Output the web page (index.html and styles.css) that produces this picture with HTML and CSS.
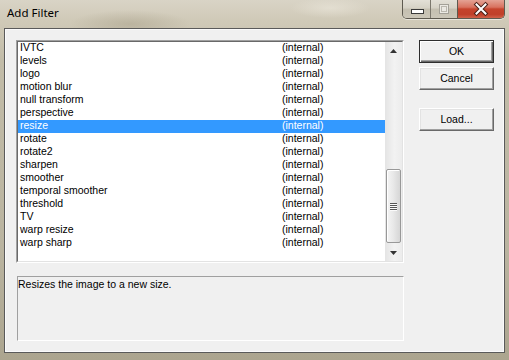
FILE: index.html
```html
<!DOCTYPE html>
<html>
<head>
<meta charset="utf-8">
<link rel="stylesheet" href="styles.css">
</head>
<body>
<div class="window">
  <div class="titlebar">
    <span class="title">Add Filter</span>
    <div class="caption">
      <div class="cb min"><svg width="27" height="18" viewBox="0 0 27 18"><rect x="8.5" y="9.5" width="12" height="4" fill="#fff" stroke="#3a3a3a"/></svg></div>
      <div class="cb max"><svg width="26" height="18" viewBox="0 0 26 18"><rect x="8.5" y="4.5" width="9" height="9" fill="#ebe9e3" stroke="#a3a097"/><rect x="10.5" y="6.5" width="5" height="5" fill="none" stroke="#bab7ae"/></svg></div>
      <div class="cb close"><svg width="46" height="18" viewBox="0 0 46 18"><path d="M18.5 4.5 L27.5 13.5 M27.5 4.5 L18.5 13.5" stroke="#4a2018" stroke-width="4" stroke-linecap="square"/><path d="M18.5 4.5 L27.5 13.5 M27.5 4.5 L18.5 13.5" stroke="#fff" stroke-width="2" stroke-linecap="square"/></svg></div>
    </div>
  </div>
  <div class="client">
    <div class="main">
      <div class="listbox">
        <div class="listinner">
          <div class="rows">
            <div class="row"><span class="name">IVTC</span><span>(internal)</span></div>
            <div class="row"><span class="name">levels</span><span>(internal)</span></div>
            <div class="row"><span class="name">logo</span><span>(internal)</span></div>
            <div class="row"><span class="name">motion blur</span><span>(internal)</span></div>
            <div class="row"><span class="name">null transform</span><span>(internal)</span></div>
            <div class="row"><span class="name">perspective</span><span>(internal)</span></div>
            <div class="row selected"><span class="name">resize</span><span>(internal)</span></div>
            <div class="row"><span class="name">rotate</span><span>(internal)</span></div>
            <div class="row"><span class="name">rotate2</span><span>(internal)</span></div>
            <div class="row"><span class="name">sharpen</span><span>(internal)</span></div>
            <div class="row"><span class="name">smoother</span><span>(internal)</span></div>
            <div class="row"><span class="name">temporal smoother</span><span>(internal)</span></div>
            <div class="row"><span class="name">threshold</span><span>(internal)</span></div>
            <div class="row"><span class="name">TV</span><span>(internal)</span></div>
            <div class="row"><span class="name">warp resize</span><span>(internal)</span></div>
            <div class="row"><span class="name">warp sharp</span><span>(internal)</span></div>
          </div>
          <div class="scrollbar">
            <div class="arrow"><svg width="7" height="4" viewBox="0 0 7 4"><path d="M3.5 0 L7 4 L0 4 Z" fill="#333"/></svg></div>
            <div class="track">
              <div class="thumb">
                <div class="grip"></div><div class="grip"></div><div class="grip"></div><div class="grip"></div>
              </div>
            </div>
            <div class="arrow"><svg width="7" height="4" viewBox="0 0 7 4"><path d="M0 0 L7 0 L3.5 4 Z" fill="#333"/></svg></div>
          </div>
        </div>
      </div>
      <div class="desc">Resizes the image to a new size.</div>
    </div>
    <div class="buttons">
      <div class="btn default">OK</div>
      <div class="btn cancel">Cancel</div>
      <div class="btn load">Load...</div>
    </div>
  </div>
</div>
</body>
</html>
```
FILE: styles.css
```css
html, body {
  margin: 0;
  padding: 0;
}
body {
  width: 509px;
  height: 360px;
  overflow: hidden;
  background: #bdb7a4;
}
.window {
  width: 509px;
  height: 360px;
  box-sizing: border-box;
  padding: 0 4px;
  background:
    radial-gradient(ellipse 60px 14px at 130px 24px, rgba(150,140,115,0.35), transparent),
    radial-gradient(ellipse 40px 10px at 330px 8px, rgba(240,236,225,0.5), transparent),
    linear-gradient(180deg, #d9d4c6 0px, #d0cab8 20px, #c2bca8 60px, #bab4a0 250px, #aca58f 360px);
  font-family: "Liberation Sans", Arial, sans-serif;
}
.titlebar {
  height: 28px;
  display: flex;
  justify-content: space-between;
  align-items: flex-start;
}
.title {
  font-family: "Noto Sans", "Open Sans", sans-serif;
  font-size: 11.5px;
  line-height: 14px;
  color: #000;
  padding: 6px 0 0 3px;
}
.caption {
  display: flex;
  height: 19px;
  box-sizing: border-box;
  border: 1px solid #5e5a50;
  border-top: none;
  border-radius: 0 0 5px 5px;
  overflow: hidden;
  margin-right: 0;
  box-shadow: 0 1px 0 rgba(255,255,255,0.5);
}
.cb {
  height: 18px;
  display: flex;
}
.cb.min {
  width: 27px;
  border-right: 1px solid #7c786d;
  background: linear-gradient(180deg, #e3e0d7 0%, #d6d2c6 45%, #c4bfb0 50%, #cbc6b8 100%);
}
.cb.max {
  width: 26px;
  border-right: 1px solid #5e5a50;
  background: linear-gradient(180deg, #e3e0d7 0%, #d6d2c6 45%, #c4bfb0 50%, #cbc6b8 100%);
}
.cb.close {
  width: 46px;
  background: linear-gradient(180deg, #e4a294 0%, #d8725f 40%, #c5432c 50%, #c0402a 80%, #d0624a 100%);
}
.client {
  height: 325px;
  box-sizing: border-box;
  border: 1px solid #5a5a5a;
  box-shadow: inset 0 0 0 1px #fbfbfb;
  background: #f0f0f0;
  padding: 11px 0 0 11px;
  display: flex;
  gap: 15px;
  font-size: 10.5px;
  color: #000;
}
.main {
  width: 388px;
  display: flex;
  flex-direction: column;
}
.listbox {
  height: 223px;
  box-sizing: border-box;
  border: 1px solid;
  border-color: #a0a0a0 #ffffff #ffffff #a0a0a0;
}
.listinner {
  height: 100%;
  box-sizing: border-box;
  border: 1px solid;
  border-color: #696969 #e3e3e3 #e3e3e3 #696969;
  background: #fff;
  display: flex;
}
.rows {
  flex: 1;
}
.row {
  height: 13px;
  box-sizing: border-box;
  line-height: 11px;
  padding: 0 0 2px 2px;
  display: flex;
  white-space: nowrap;
}
.row .name {
  width: 262px;
}
.row.selected {
  background: #3399ff;
  color: #fff;
}
.scrollbar {
  width: 17px;
  display: flex;
  flex-direction: column;
  background: linear-gradient(90deg, #e4e4e4 0%, #f2f2f2 55%, #ececec 100%);
}
.arrow {
  height: 17px;
  display: flex;
  align-items: center;
  justify-content: center;
}
.track {
  flex: 1;
  padding-top: 110px;
}
.thumb {
  width: 15px;
  height: 74px;
  margin-left: 1px;
  box-sizing: border-box;
  border: 1px solid #989898;
  border-radius: 2px;
  background: linear-gradient(90deg, #f4f4f4 0%, #e9e9e9 45%, #d6d6d6 100%);
  box-shadow: inset 1px 1px 0 #fff;
  display: flex;
  flex-direction: column;
  align-items: center;
  justify-content: center;
  gap: 1px;
}
.grip {
  width: 7px;
  height: 1px;
  background: #555;
  box-shadow: 0 1px 0 #fafafa;
}
.desc {
  margin-top: 13px;
  margin-left: 1px;
  height: 65px;
  width: 387px;
  box-sizing: border-box;
  border: 1px solid;
  border-color: #a0a0a0 #ffffff #ffffff #a0a0a0;
  line-height: 14px;
  padding-left: 0;
}
.buttons {
  width: 75px;
  display: flex;
  flex-direction: column;
}
.btn {
  width: 75px;
  height: 23px;
  box-sizing: border-box;
  background: #f0f0f0;
  border: 1px solid;
  border-color: #ffffff #696969 #696969 #ffffff;
  box-shadow: inset -1px -1px 0 #a0a0a0, inset 1px 1px 0 #e3e3e3;
  display: flex;
  align-items: center;
  justify-content: center;
  line-height: 13px;
}
.btn.default {
  border: 1px solid #2e2e2e;
  box-shadow: inset 1px 1px 0 #fff, inset -1px -1px 0 #696969, inset -2px -2px 0 #a0a0a0;
}
.btn.cancel {
  margin-top: 4px;
}
.btn.load {
  margin-top: 18px;
}
```
